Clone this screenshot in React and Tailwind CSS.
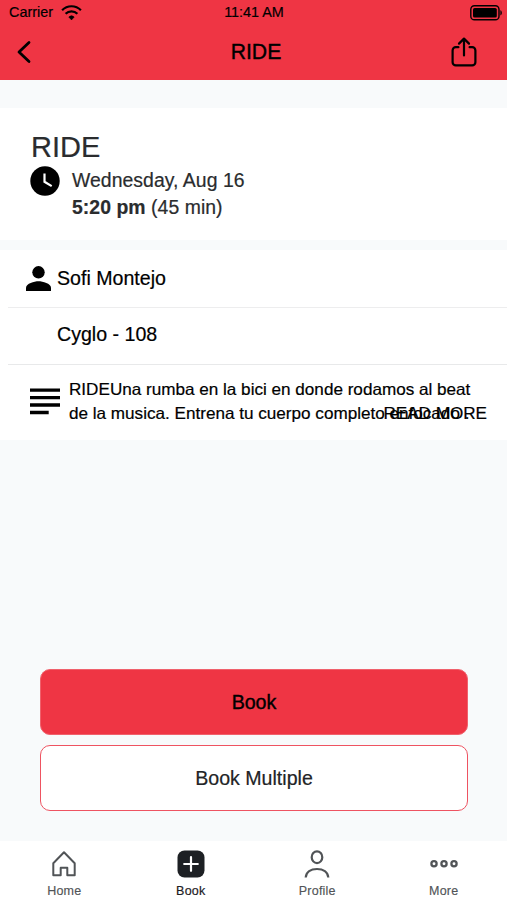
import React from 'react';
import { clsx } from 'clsx';

const WifiIcon = () => (
  <svg width="21" height="15" viewBox="0 0 21 15" fill="none" stroke="black" strokeWidth="2.2">
    <path d="M1.1 5.2a13.2 13.2 0 0 1 18.8 0" />
    <path d="M4.6 8.7a8.4 8.4 0 0 1 11.8 0" />
    <path d="M10.5 14.9 7.8 12a3.800 3.800 0 0 1 5.400 0z" fill="black" stroke="black" strokeWidth="0.6" />
  </svg>
);

const BatteryIcon = () => (
  <svg width="33" height="16" viewBox="0 0 33 16">
    <rect x="0.8" y="0.8" width="28.2" height="14" rx="3.6" fill="none" stroke="black" strokeWidth="1.4" />
    <rect x="3" y="3" width="23.8" height="9.6" rx="1.6" fill="black" />
    <path d="M30.4 5.2c1.9.5 1.9 4.7 0 5.2z" fill="black" />
  </svg>
);

const ShareIcon = () => (
  <svg width="26" height="30" viewBox="0 0 26 30" fill="none" stroke="black" strokeWidth="2.2" strokeLinecap="round" strokeLinejoin="round">
    <path d="M7.4 10.2H4.8a3.2 3.2 0 0 0-3.2 3.2v11.8a3.2 3.2 0 0 0 3.2 3.2h16.4a3.2 3.2 0 0 0 3.2-3.2V13.4a3.2 3.2 0 0 0-3.2-3.2h-2.6" />
    <path d="M13 18.5V2M8 6.6 13 1.6l5 5" />
  </svg>
);

const ClockIcon = () => (
  <svg width="30" height="30" viewBox="0 0 30 30">
    <circle cx="15" cy="15" r="14.7" fill="black" />
    <path d="M14.5 7.6v8.2l7.2 4.3" fill="none" stroke="white" strokeWidth="2.2" />
  </svg>
);

const PersonIcon = () => (
  <svg width="25" height="25" viewBox="0 0 25 25" fill="black">
    <circle cx="12.5" cy="6.3" r="6.2" />
    <path d="M0 25v-3.2c0-4.2 8.3-6.5 12.5-6.5S25 17.6 25 21.8V25z" />
  </svg>
);

const LinesIcon = () => (
  <svg width="30" height="27" viewBox="0 0 30 27" fill="black">
    <path d="M0 .4h30v3.4H0zM0 7.9h30v3.4H0zM0 15.300h30v3.400H0zM0 22.800h18.700v3.400H0z" />
  </svg>
);

const HomeIcon = () => (
  <svg width="28" height="28" viewBox="0 0 28 28" fill="none" stroke="currentColor" strokeWidth="2" strokeLinejoin="round">
    <path d="M3.3 13.200 14 2.300l10.700 10.900v12.100h-7.400v-7.500h-6.600v7.500H3.300z" />
  </svg>
);

const BookIcon = () => (
  <svg width="28" height="28" viewBox="0 0 28 28">
    <rect x="0.5" y="0.5" width="27" height="27" rx="7" fill="currentColor" />
    <path d="M14 7.2v13.6M7.2 14h13.6" stroke="white" strokeWidth="2.2" strokeLinecap="round" />
  </svg>
);

const ProfileIcon = () => (
  <svg width="28" height="28" viewBox="0 0 28 28" fill="none" stroke="currentColor" strokeWidth="2.2">
    <ellipse cx="14" cy="7.2" rx="5.3" ry="5.9" />
    <path d="M2.7 27.500c.5-5.500 5-8.500 11.300-8.500s10.800 3 11.300 8.500" />
  </svg>
);

const MoreIcon = () => (
  <svg width="28" height="28" viewBox="0 0 28 28" fill="none" stroke="currentColor" strokeWidth="2.300">
    <circle cx="4" cy="13.700" r="2.600" />
    <circle cx="14" cy="13.700" r="2.600" />
    <circle cx="24" cy="13.700" r="2.600" />
  </svg>
);

const tabs = [
  { label: 'Home', icon: HomeIcon },
  { label: 'Book', icon: BookIcon, active: true },
  { label: 'Profile', icon: ProfileIcon },
  { label: 'More', icon: MoreIcon },
];

const Header = () => (
  <header className="h-20 shrink-0 bg-[#ef3544] text-black">
    <div className="grid h-[25px] grid-cols-3 items-center pl-[9px] pr-[4px] text-[14.4px] [-webkit-text-stroke:0.2px]">
      <div className="flex items-center gap-[8px]">
        <span>Carrier</span>
        <WifiIcon />
      </div>
      <span className="pr-[4px] text-center">11:41 AM</span>
      <div className="flex justify-end"><BatteryIcon /></div>
    </div>
    <div className="grid h-[53px] grid-cols-3 items-center pl-4 pr-[30px]">
      <button aria-label="Back" className="w-fit">
        <svg width="16" height="24" viewBox="0 0 16 24" fill="none" stroke="black" strokeWidth="2.8" strokeLinecap="round" strokeLinejoin="round">
          <path d="M13 2.500 3 12l10 9.500" />
        </svg>
      </button>
      <h1 className="pl-[19px] pt-px text-center text-[21.2px] [-webkit-text-stroke:0.4px]">RIDE</h1>
      <button aria-label="Share" className="justify-self-end"><ShareIcon /></button>
    </div>
  </header>
);

const App = () => {
  return (
    <div className="flex h-[900px] w-[507px] flex-col overflow-hidden bg-[#f8fafb] font-['Liberation_Sans',Arial,sans-serif] text-black">
      <Header />

      <section className="mt-7 h-[132px] shrink-0 bg-white pl-[30px] pt-[21px] text-[#2a2c2e]">
        <h2 className="pl-px text-[29px] leading-[36px] [-webkit-text-stroke:0.2px]">RIDE</h2>
        <div className="flex gap-3">
          <div className="pt-[1px]"><ClockIcon /></div>
          <div className="pt-[2px] text-[19.4px] leading-[27px] tracking-[0.05px] [-webkit-text-stroke:0.2px]">
            <p>Wednesday, Aug 16</p>
            <p><b>5:20 pm</b> (45 min)</p>
          </div>
        </div>
      </section>

      <section className="mt-2.5 h-[190px] shrink-0 bg-white pl-2 text-[19.6px]">
        <div className="flex h-[58px] items-center gap-1.5 border-b border-[#ededee] pl-[18px] [-webkit-text-stroke:0.2px]">
          <PersonIcon />
          <span>Sofi Montejo</span>
        </div>
        <div className="flex h-[57px] items-center border-b border-[#e8e9ea] pb-[3px] pl-[49px] [-webkit-text-stroke:0.2px]">Cyglo - 108</div>
        <div className="flex h-[75px] gap-[9px] pl-[22px] pt-[13px]">
          <div className="pt-[10px]"><LinesIcon /></div>
          <div className="relative w-[418px] text-[17.12px] leading-6 [-webkit-text-stroke:0.2px]">
            <p className="whitespace-nowrap">RIDEUna rumba en la bici en donde rodamos al beat</p>
            <p className="whitespace-nowrap">de la musica. Entrena tu cuerpo completo enfocado .</p>
            <button className="absolute right-0 top-6 whitespace-nowrap">READ MORE</button>
          </div>
        </div>
      </section>

      <div className="mb-[30px] mt-auto flex flex-col gap-[10px] pl-10 pr-[39px] text-[19.6px]">
        <button className="h-[66px] rounded-[10px] border border-[#f0616c] bg-[#ef3544] pt-px [-webkit-text-stroke:0.4px]">Book</button>
        <button className="h-[66px] rounded-[10px] border-[1.5px] border-[#ee5361] bg-white pt-px text-[#222426] [-webkit-text-stroke:0.2px]">Book Multiple</button>
      </div>

      <nav className="grid h-[59px] shrink-0 grid-cols-4 bg-white pl-px">
        {tabs.map(({ label, icon: Icon, active }) => (
          <button
            key={label}
            className={clsx(
              'flex flex-col items-center pt-[9px] text-[12.5px] leading-4 tracking-[0.2px]',
              active ? 'text-[#1d2024] [-webkit-text-stroke:0.2px]' : 'text-[#515457] [-webkit-text-stroke:0.15px]'
            )}
          >
            <Icon />
            <span className="mt-[5px]">{label}</span>
          </button>
        ))}
      </nav>
    </div>
  );
};

export default App;
